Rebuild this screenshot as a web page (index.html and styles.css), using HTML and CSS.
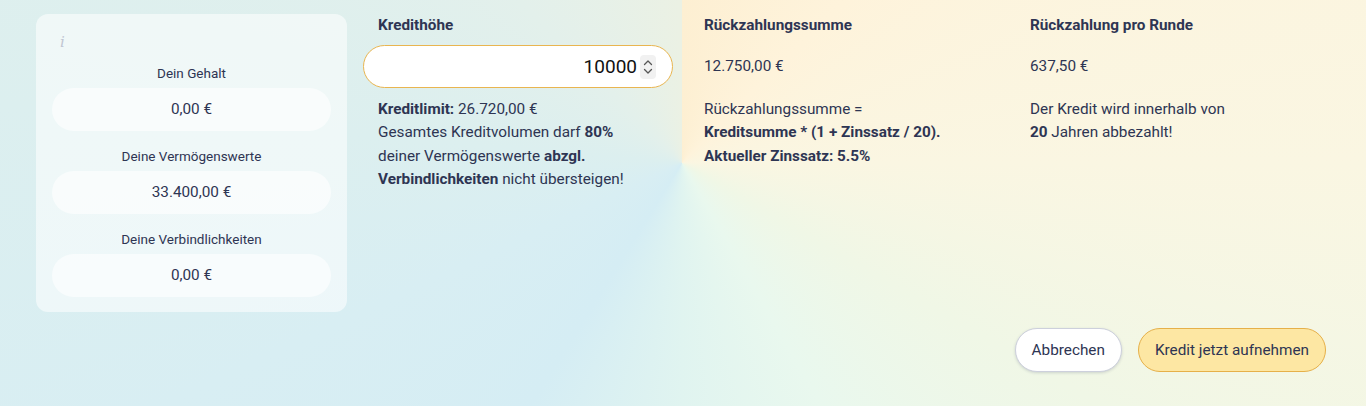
FILE: index.html
```html
<!DOCTYPE html>
<html lang="de">
<head>
  <meta charset="UTF-8" />
  <meta name="viewport" content="width=device-width, initial-scale=1.0" />
  <title>Kredit aufnehmen</title>
  <link rel="stylesheet" href="styles.css">
</head>
<body>
  <div class="loan-dialog">
    <div class="loan-grid">
      <div class="finance-card">
        <span class="info-icon">i</span>
        <div class="finance-label">Dein Gehalt</div>
        <div class="finance-value">0,00 €</div>
        <div class="finance-label">Deine Vermögenswerte</div>
        <div class="finance-value">33.400,00 €</div>
        <div class="finance-label">Deine Verbindlichkeiten</div>
        <div class="finance-value">0,00 €</div>
      </div>

      <div class="loan-col">
        <div class="col-title">Kredithöhe</div>
        <div class="amount-field">
          <input type="number" id="amount-input" value="10000" aria-label="Kredithöhe" />
          <span class="spinner">
            <svg width="12" height="20" viewBox="0 0 12 20" fill="none" stroke="#555" stroke-width="1.3" stroke-linecap="round" stroke-linejoin="round">
              <path d="M2.5 7.5 6 4l3.5 3.5" />
              <path d="M2.5 12.5 6 16l3.5-3.5" />
            </svg>
          </span>
        </div>
        <p class="col-text">
          <b>Kreditlimit:</b> 26.720,00 €<br>
          Gesamtes Kreditvolumen darf <b>80%</b><br>
          deiner Vermögenswerte <b>abzgl.</b><br>
          <b>Verbindlichkeiten</b> nicht übersteigen!
        </p>
      </div>

      <div class="loan-col">
        <div class="col-title">Rückzahlungssumme</div>
        <div class="col-value">12.750,00 €</div>
        <p class="col-text">
          Rückzahlungssumme =<br>
          <b>Kreditsumme * (1 + Zinssatz / 20).</b><br>
          <b>Aktueller Zinssatz: 5.5%</b>
        </p>
      </div>

      <div class="loan-col">
        <div class="col-title">Rückzahlung pro Runde</div>
        <div class="col-value">637,50 €</div>
        <p class="col-text">
          Der Kredit wird innerhalb von<br>
          <b>20</b> Jahren abbezahlt!
        </p>
      </div>
    </div>

    <div class="actions">
      <button class="btn btn-cancel">Abbrechen</button>
      <button class="btn btn-primary">Kredit jetzt aufnehmen</button>
    </div>
  </div>
</body>
</html>
```

FILE: styles.css
```css
* {
  box-sizing: border-box;
}
body, html {
  margin: 0;
  padding: 0;
  height: 100%;
  font-family: Roboto, "Liberation Sans", sans-serif;
  font-size: 15.3px;
  color: #2e3553;
}
body {
  background:
    conic-gradient(from 0deg at 682px 163px,
      #fdefd2 0deg,
      #fef3db 45deg,
      #faf6e2 90deg,
      #f0f7e6 120deg,
      #e9f8ee 150deg,
      #e0f4f0 180deg,
      #d5edf4 212deg,
      #d8eef3 245deg,
      #dcefef 275deg,
      #e3f0eb 315deg,
      #ebf1e4 359deg);
}
.loan-dialog {
  padding: 14px 40px 0 36px;
}
.loan-grid {
  display: grid;
  grid-template-columns: 311px 310px 310px 310px;
  column-gap: 16px;
  align-items: start;
}
.finance-card {
  display: flex;
  flex-direction: column;
  padding: 19px 16px 15px;
  border-radius: 12px;
  background: rgba(255, 255, 255, 0.55);
}
.info-icon {
  font-family: "DejaVu Serif", serif;
  font-style: italic;
  font-size: 15px;
  line-height: 18px;
  height: 30px;
  padding-left: 8px;
  color: #c0c6d2;
}
.finance-label {
  text-align: center;
  font-size: 13.5px;
  line-height: 20px;
  margin-bottom: 5px;
}
.finance-value {
  height: 43px;
  line-height: 43px;
  border-radius: 22px;
  text-align: center;
  font-size: 15.3px;
  background: rgba(255, 255, 255, 0.6);
  margin-bottom: 15px;
}
.finance-value:last-child {
  margin-bottom: 0;
}
.loan-col {
  display: flex;
  flex-direction: column;
}
.col-title {
  font-weight: 700;
  line-height: 22px;
  padding: 0 15px;
  margin-bottom: 9px;
}
.amount-field {
  position: relative;
  height: 43px;
}
.amount-field input {
  width: 100%;
  height: 43px;
  padding: 0 35px 0 16px;
  border: 1px solid #e9b550;
  border-radius: 22px;
  background: #fff;
  text-align: right;
  font-family: Roboto, "Liberation Sans", sans-serif;
  font-size: 19px;
  color: #111;
  -moz-appearance: textfield;
}
.amount-field input::-webkit-inner-spin-button,
.amount-field input::-webkit-outer-spin-button {
  -webkit-appearance: none;
  margin: 0;
}
.amount-field input:focus {
  outline: none;
}
.spinner {
  position: absolute;
  right: 17px;
  top: 10px;
  width: 16px;
  height: 24px;
  display: flex;
  align-items: center;
  justify-content: center;
  border-radius: 4px;
  background: #f1f1f1;
}
.col-value {
  height: 43px;
  line-height: 43px;
  padding: 0 15px;
}
.col-text {
  margin: 10px 0 0;
  padding: 0 15px;
  line-height: 23.4px;
}
.col-text b {
  font-weight: 700;
}
.actions {
  display: flex;
  justify-content: flex-end;
  gap: 16px;
  margin-top: 16px;
}
.btn {
  height: 44px;
  padding: 0 16px;
  border-radius: 22px;
  font-family: Roboto, "Liberation Sans", sans-serif;
  font-size: 15.3px;
  color: #2e3553;
  cursor: pointer;
}
.btn-cancel {
  background: #fff;
  border: 1px solid #cdd0dc;
  box-shadow: 0 1px 3px rgba(40, 50, 90, 0.18);
}
.btn-primary {
  background: #fde7a3;
  border: 1px solid #e6b049;
}
```
